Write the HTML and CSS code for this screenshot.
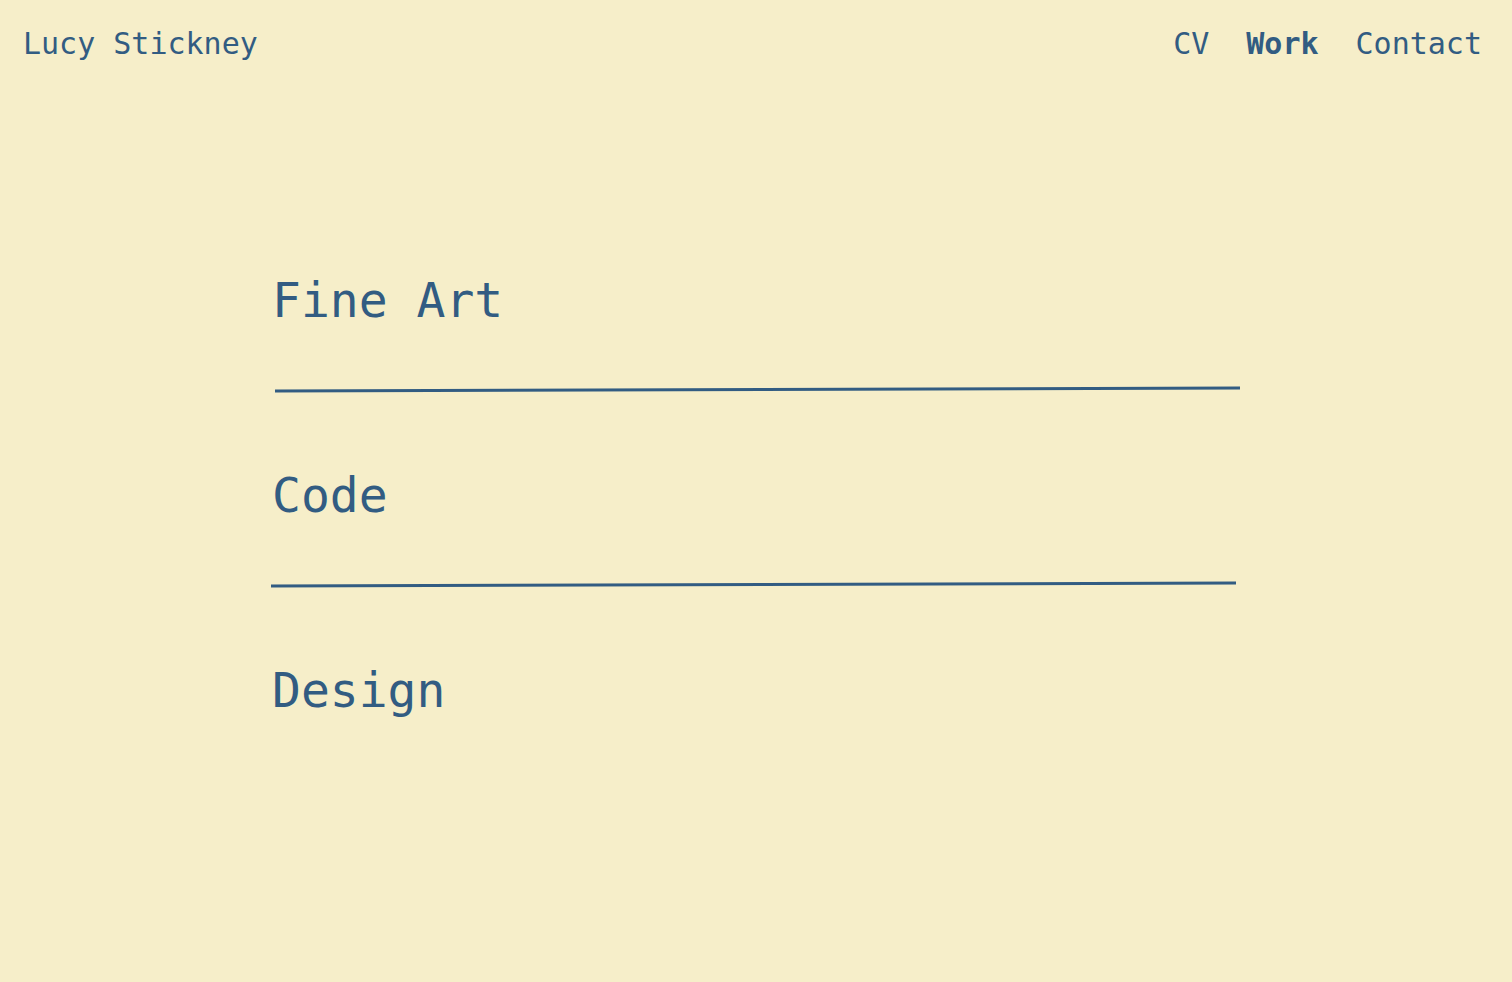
FILE: index.html
```html
<!DOCTYPE html>
<html lang="en">
<head>
<meta charset="utf-8">
<title>Lucy Stickney</title>
<link rel="stylesheet" href="styles.css">
</head>
<body>
<header class="site-header">
  <a class="brand" href="#">Lucy Stickney</a>
  <nav class="nav">
    <a class="nav-link" href="#">CV</a>
    <a class="nav-link active" href="#">Work</a>
    <a class="nav-link" href="#">Contact</a>
  </nav>
</header>
<main class="work">
  <section class="item">
    <h2 class="item-title">Fine Art</h2>
    <svg class="rule" width="970" height="8" viewBox="0 0 970 8"><line x1="4" y1="6" x2="969" y2="3" /></svg>
  </section>
  <section class="item">
    <h2 class="item-title">Code</h2>
    <svg class="rule" width="970" height="8" viewBox="0 0 970 8"><line x1="0" y1="6" x2="965" y2="3" /></svg>
  </section>
  <section class="item">
    <h2 class="item-title">Design</h2>
  </section>
</main>
</body>
</html>
```
FILE: styles.css
```css
html, body {
  margin: 0;
  padding: 0;
}
body {
  background: #f6eec9;
  color: #325c82;
  font-family: "DejaVu Sans Mono", "Liberation Mono", monospace;
  min-height: 982px;
}
a {
  color: inherit;
  text-decoration: none;
}
.site-header {
  display: flex;
  justify-content: space-between;
  align-items: flex-start;
  padding: 26px 30px 0 23px;
  font-size: 30px;
  line-height: 36px;
}
.nav {
  display: flex;
  gap: 37px;
}
.nav-link.active {
  font-weight: bold;
}
.work {
  width: 970px;
  margin: 0 auto;
  padding-top: 214px;
  display: flex;
  flex-direction: column;
  gap: 78px;
}
.item {
  display: flex;
  flex-direction: column;
}
.item-title {
  margin: 0;
  font-weight: normal;
  font-size: 48px;
  line-height: 48px;
  padding-left: 1px;
}
.rule {
  display: block;
  margin-top: 61px;
}
.rule line {
  stroke: #325c82;
  stroke-width: 3;
}
```
